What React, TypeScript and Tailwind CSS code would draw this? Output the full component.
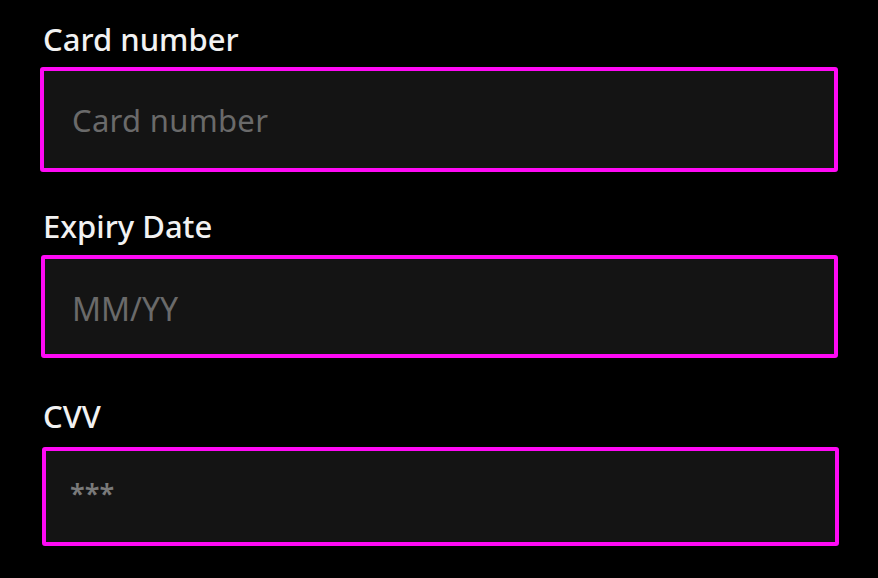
import React from "react";

const font = { fontFamily: '"Noto Sans", "Open Sans", sans-serif' };

export default function App() {
  return (
    <div
      className="w-[878px] h-[578px] bg-black overflow-hidden pl-[40px] pt-[24px]"
      style={font}
    >
      <form className="flex flex-col w-[798px]">
        <label className="text-[31px] leading-[31px] font-medium text-[#f2f2f2] pl-[3px]">Card number</label>
        <div className="mt-[12px] h-[105px] border-[4px] border-[#ff0af5] rounded-[3px] bg-[#141414] flex items-center pl-[28px] pt-[1px]">
          <span className="text-[31px] leading-[31px] text-[#6a6a6a] tracking-[0.3px]">Card number</span>
        </div>

        <label className="mt-[39px] ml-[1px] text-[31px] leading-[31px] font-medium text-[#f2f2f2] pl-[2px]">Expiry Date</label>
        <div className="mt-[13px] ml-[1px] h-[103px] border-[4px] border-[#ff0af5] rounded-[3px] bg-[#141414] flex items-center pl-[27px] pt-[5px]">
          <span className="text-[32px] leading-[32px] text-[#6a6a6a]">MM/YY</span>
        </div>

        <label className="mt-[43px] ml-[2px] text-[31px] leading-[31px] font-medium text-[#f2f2f2] pl-[1px]">CVV</label>
        <div className="mt-[15px] ml-[2px] w-[797px] h-[99px] border-[4px] border-[#ff0af5] rounded-[3px] bg-[#141414] flex items-center pl-[24px] pb-[6px]">
          <span className="text-[27px] leading-[27px] text-[#7a7a7a] font-semibold">***</span>
        </div>
      </form>
    </div>
  );
}
